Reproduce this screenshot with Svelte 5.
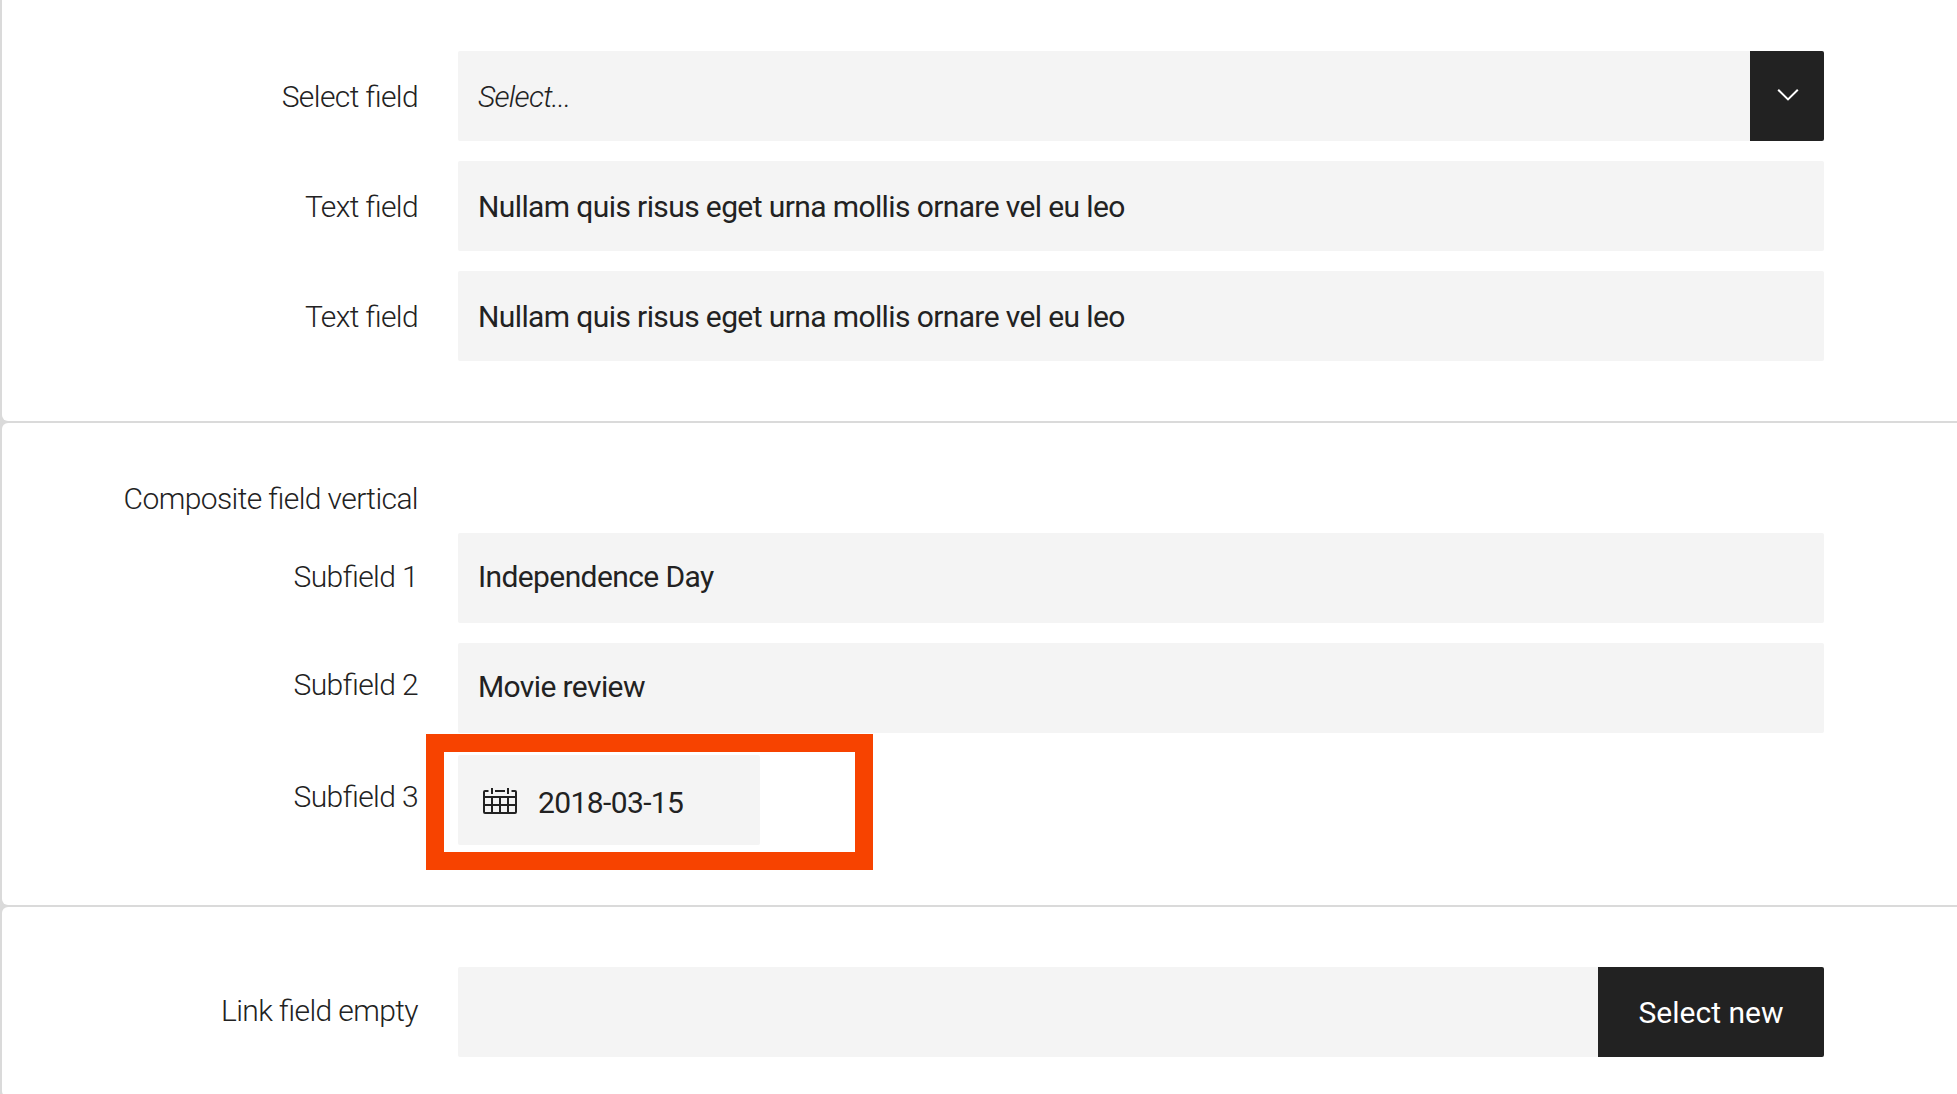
<script>
  const topRows = [
    { label: 'Text field', value: 'Nullam quis risus eget urna mollis ornare vel eu leo' },
    { label: 'Text field', value: 'Nullam quis risus eget urna mollis ornare vel eu leo' }
  ];
</script>

<main class="page">
  <section class="panel first">
    <div class="row">
      <span class="label">Select field</span>
      <div class="field">
        <span class="value placeholder">Select...</span>
        <button class="toggle" aria-label="Open options">
          <svg width="22" height="14" viewBox="0 0 22 14"><path d="M1.2 1.7 11 11.4 20.8 1.7" fill="none" stroke="#fff" stroke-width="2" /></svg>
        </button>
      </div>
    </div>
    {#each topRows as row}
      <div class="row">
        <span class="label">{row.label}</span>
        <div class="field"><span class="value">{row.value}</span></div>
      </div>
    {/each}
  </section>

  <section class="panel composite">
    <div class="heading"><span class="label">Composite field vertical</span></div>
    <div class="row">
      <span class="label">Subfield 1</span>
      <div class="field"><span class="value raised">Independence Day</span></div>
    </div>
    <div class="row">
      <span class="label second">Subfield 2</span>
      <div class="field"><span class="value raised">Movie review</span></div>
    </div>
    <div class="row date-row">
      <span class="label third">Subfield 3</span>
      <div class="field date">
        <svg class="calendar" width="36" height="28" viewBox="0 0 36 28" fill="none" stroke="#222" stroke-width="2">
          <path d="M6.5 3H3Q2 3 2 4V24Q2 25 3 25H33Q34 25 34 24V4Q34 3 33 3H29.5M13 3H23M10 0V6M26 0V6M2 9H34M2 17H34M10 9V25M18 9V25M26 9V25" />
        </svg>
        <span class="date-value">2018-03-15</span>
      </div>
      <div class="highlight"></div>
    </div>
  </section>

  <section class="panel last">
    <div class="row">
      <span class="label link-label">Link field empty</span>
      <div class="field">
        <span class="value"></span>
        <button class="select-new">Select new</button>
      </div>
    </div>
  </section>
</main>

<style>
  :global(body) { background: #fff; overflow: hidden; }
  .page {
    box-sizing: border-box;
    width: 100%;
    height: 1094px;
    padding-left: 2px;
    overflow: hidden;
    background: #dadada;
    display: flex;
    flex-direction: column;
    gap: 2px;
    font: 400 30px/40px Roboto, sans-serif;
    letter-spacing: -0.61px;
    color: #222;
  }
  .panel {
    box-sizing: border-box;
    flex: none;
    display: flex;
    flex-direction: column;
    gap: 20px;
    background: #fff;
    border-radius: 6px 0 0 6px;
  }
  .first { height: 421px; padding-top: 51px; border-top-left-radius: 0; }
  .composite { height: 482px; padding-top: 56px; }
  .last { height: 190px; padding-top: 60px; }
  .row {
    position: relative;
    display: grid;
    grid-template-columns: 416px 1366px;
    column-gap: 40px;
    height: 90px;
  }
  .date-row { margin-top: 2px; }
  .heading { width: 416px; height: 34px; text-align: right; }
  .label {
    font-weight: 300;
    text-align: right;
    white-space: nowrap;
    font-feature-settings: 'liga' 1;
  }
  .row .label { padding-top: 26px; }
  .row .second { padding-top: 22px; }
  .row .third { padding-top: 22px; }
  .row .link-label { padding-top: 24px; }
  .composite .row:nth-child(2) .label { padding-top: 24px; }
  .field {
    display: flex;
    align-items: stretch;
    overflow: hidden;
    border-radius: 2px;
    background: #f4f4f4;
  }
  .value { flex: 1; padding: 26px 20px 0; }
  .value.raised { padding-top: 24px; }
  .placeholder { font-weight: 300; font-style: italic; letter-spacing: -0.75px; }
  button {
    border: 0;
    padding: 0;
    background: #222;
    color: #fff;
    font: inherit;
  }
  .toggle {
    box-sizing: border-box;
    width: 74px;
    padding: 0 0 3px 2px;
    display: flex;
    align-items: center;
    justify-content: center;
  }
  .select-new { width: 226px; padding-top: 1px; letter-spacing: 0; }
  .date { width: 302px; }
  .calendar { flex: none; margin: 33px 20px 0 24px; }
  .date-value { padding-top: 28px; }
  .highlight {
    position: absolute;
    box-sizing: border-box;
    left: 424px;
    top: -21px;
    width: 447px;
    height: 136px;
    border: 18px solid #f74300;
  }
</style>
